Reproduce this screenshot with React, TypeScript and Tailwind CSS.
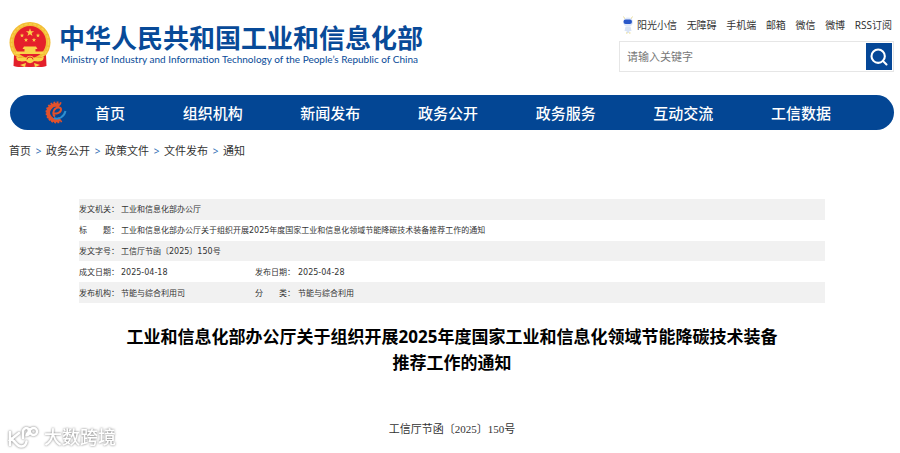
import {Search} from "lucide-react";

const topLinks = ["无障碍", "手机端", "邮箱", "微信", "微博", "RSS订阅"];
const navItems = ["首页", "组织机构", "新闻发布", "政务公开", "政务服务", "互动交流", "工信数据"];
const crumbs = ["首页", "政务公开", "政策文件", "文件发布", "通知"];

const rows = [
    [{label: "发文机关：", value: "工业和信息化部办公厅"}],
    [{label: "标　　题：", value: "工业和信息化部办公厅关于组织开展2025年度国家工业和信息化领域节能降碳技术装备推荐工作的通知"}],
    [{label: "发文字号：", value: "工信厅节函〔2025〕150号"}],
    [{label: "成文日期：", value: "2025-04-18"}, {label: "发布日期：", value: "2025-04-28"}],
    [{label: "发布机构：", value: "节能与综合利用司"}, {label: "分　　类：", value: "节能与综合利用"}],
];

const star = "M0-5 1.2-1.6 4.8-1.5 1.9.6 2.9 4 0 2-2.9 4-1.9.6-4.8-1.5-1.2-1.6z";

const Emblem = () => (
    <svg className="w-[42px] h-[46px] shrink-0" viewBox="0 0 42 46" aria-hidden="true">
        <path d="M8 31 5 44l5 1 5-.5 6 .5 6-.5 5 .5 5-1-3-13z" fill="#e3202a"/>
        <circle cx="21" cy="20.500" r="20.500" fill="#f3bd35"/>
        <circle cx="21" cy="20.500" r="18.500" fill="none" stroke="#f8cf4c" strokeWidth="1.500" strokeDasharray="3 1.500"/>
        <circle cx="21" cy="20" r="16" fill="#e5202b"/>
        <path d="M5 33 4.500 44l6 1 5-.5 5.500.5 5.500-.5 5 .5 6-1L37 33c-4 3-8 3-12 3h-8c-4 0-8 0-12-3z" fill="#e3202a"/>
        <g fill="#f9d54a">
            <path d={star} transform="translate(21 10.500) scale(.85)"/>
            <path d={star} transform="translate(13 13.500) scale(.45)"/>
            <path d={star} transform="translate(29 13.500) scale(.45)"/>
            <path d={star} transform="translate(17 18) scale(.45)"/>
            <path d={star} transform="translate(25 18) scale(.45)"/>
            <path d="M15 24.500h12l1.500 2.500h-2v2.500h8V32H7v-2.500h8.500V27h-2z"/>
            <path d="M7 34.500c4 2 8 1.500 10 1.500a4.500 4 0 0 1 8 0c2 0 6 .5 10-1.500L34 38c-3 2-6 1.500-9 1a4.500 4 0 0 1-8 0c-3 .5-6 1-9-1z"/>
            <path d="m11 43 6-2-1 4zM31 43l-6-2 1 4z"/>
        </g>
        <path d="M18 37.500a3 2.500 0 0 1 6 0" fill="none" stroke="#e3202a"/>
    </svg>
);

const Mascot = () => (
    <svg className="w-3 h-[18px]" viewBox="0 0 12 18" aria-hidden="true">
        <path d="M3 3 1.500.5M9 3l1.500-2.500" stroke="#e8dc9a"/>
        <ellipse cx="6" cy="6" rx="5" ry="4.500" fill="#dfe8f8"/>
        <rect x="1.500" y="3.500" width="8.500" height="4.500" rx="2.200" fill="#2857c8"/>
        <path d="M3.500 10.500h5l1 4.500h-2l-.5 2h-2l-.5-2h-2z" fill="#d9e4f5"/>
        <path d="M4 17h1.500M7 17h1.500" stroke="#eadb88"/>
    </svg>
);

const NavLogo = () => (
    <svg className="w-[23px] h-[23px] shrink-0" viewBox="0 0 23 23" fill="none" aria-hidden="true">
        <path d="M17 3A9.500 9.500 0 1 0 17.500 19.500" stroke="#e2512b" strokeWidth="3" strokeDasharray="1.700 1.200"/>
        <path d="M15.500 5A7.600 7.600 0 1 0 16 18" stroke="#e2512b" strokeWidth="4"/>
        <path d="M10 17c4.500 2 10-1 11.500-7" stroke="#2e8fd0" strokeWidth="2"/>
        <path d="M9 12.500c4 .5 8-1 8-4 0-2.500-4-2.500-6-.5s-2.500 6 0 7.500" stroke="#e2512b" strokeWidth="2"/>
    </svg>
);

const Watermark = () => (
    <div className="absolute left-2 bottom-1 flex items-center gap-1 text-white drop-shadow-[0_0_1px_#777777]">
        <svg className="w-8 h-6" viewBox="0 0 32 24" fill="none" stroke="currentColor" strokeWidth="2.500" strokeLinecap="round" aria-hidden="true">
            <path d="M2 7v13M11 8l-8 6.500c4 0 5 7 10 7 3 0 5-2 5.500-5"/>
            <path d="M15 13V6a3.500 3.500 0 1 1 2.500 4C20 10 21 3 25.500 3a3.500 3.500 0 1 1 0 7c-3 0-3.500-3-5-5"/>
        </svg>
        <span className="text-lg leading-6 font-medium">大数跨境</span>
    </div>
);

const App = () => {
    return (
        <div className="relative min-h-screen bg-white pt-4 text-[#333333] font-['Noto_Sans','Noto_Sans_CJK_SC',sans-serif]">
            <header className="flex justify-between items-start pl-[9px] pr-[6px]">
                <a href="#" className="flex gap-2 pt-[6px] text-[#084a98]">
                    <Emblem/>
                    <div className="pt-px">
                        <h1 className="text-[26px] leading-[30px] font-bold whitespace-nowrap">中华人民共和国工业和信息化部</h1>
                        <p className="pl-[2px] text-[10px] leading-3 font-['Lato',sans-serif] whitespace-nowrap">Ministry of Industry and Information Technology of the People’s Republic of China</p>
                    </div>
                </a>

                <div className="w-[275px]">
                    <nav className="flex justify-between items-center pl-[3px] pr-[2px] text-[10px] leading-[18px] whitespace-nowrap">
                        <a href="#" className="flex items-center gap-[3px]"><Mascot/>阳光小信</a>
                        {topLinks.map((link) => <a key={link} href="#">{link}</a>)}
                    </nav>
                    <form className="mt-[7px] flex items-center justify-between border border-[#e6e6e6] h-[31px] pl-[7px] pr-px" onSubmit={(e) => e.preventDefault()}>
                        <input type="text" aria-label="请输入关键字" placeholder="请输入关键字" className="min-w-0 flex-1 pt-[2px] text-[11px] outline-none placeholder:text-[#777777]"/>
                        <button type="submit" aria-label="搜索" className="w-[26px] h-[27px] bg-[#054797] text-white flex items-center justify-center">
                            <Search size={20} strokeWidth={2.5}/>
                        </button>
                    </form>
                </div>
            </header>

            <nav className="mt-[23px] ml-[10px] mr-[6px] h-[35px] rounded-full bg-[#034694] text-white flex items-center pl-[34px] pr-[63px]">
                <NavLogo/>
                <div className="flex-1 ml-7 flex justify-between text-[15px] leading-5 font-medium whitespace-nowrap">
                    {navItems.map((item) => <a key={item} href="#">{item}</a>)}
                </div>
            </nav>

            <nav className="mt-[13px] pl-[9px] flex text-[11px] leading-4">
                {crumbs.map((crumb, i) => (
                    <div key={crumb} className="flex">
                        {i > 0 && <span className="w-[15px] text-center text-[10px] text-[#2f6fb5]">&gt;</span>}
                        <a href="#">{crumb}</a>
                    </div>
                ))}
            </nav>

            <main className="mt-10 pl-[79px] pr-[75px]">
                <table className="w-full h-[104px] table-fixed text-[8px] leading-3 text-left font-['DejaVu_Sans','Noto_Sans_CJK_SC',sans-serif]">
                    <colgroup>
                        <col className="w-[42px]"/>
                        <col className="w-[134px]"/>
                        <col className="w-[43px]"/>
                        <col/>
                    </colgroup>
                    <tbody>
                        {rows.map((row) => (
                            <tr key={row[0].label} className="odd:bg-[#f1f1f1]">
                                {row.map(({label, value}) => [
                                    <th key={label} scope="row" className="p-0 pt-[2px] font-normal whitespace-nowrap">{label}</th>,
                                    <td key={value} colSpan={row.length === 1 ? 3 : 1} className="p-0 pt-[2px]">{value}</td>,
                                ])}
                            </tr>
                        ))}
                    </tbody>
                </table>

                <h2 className="mt-[21px] mx-auto max-w-[656px] text-[17px] leading-[26px] font-bold text-center text-black">
                    工业和信息化部办公厅关于组织开展2025年度国家工业和信息化领域节能降碳技术装备推荐工作的通知
                </h2>
                <p className="mt-[45px] text-[11px] leading-4 text-center font-['Liberation_Serif','Noto_Sans_CJK_SC',serif]">工信厅节函〔2025〕150号</p>
            </main>

            <Watermark/>
        </div>
    );
};

export default App;
